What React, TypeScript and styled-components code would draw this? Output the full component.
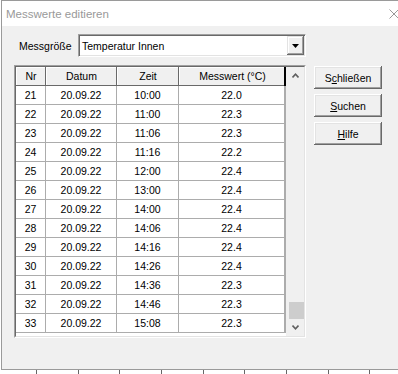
import styled, { createGlobalStyle } from "styled-components";

const GlobalStyle = createGlobalStyle`
  html, body {
    margin: 0;
    padding: 0;
    background: #ffffff;
    overflow: hidden;
  }
  body {
    font-family: "Liberation Sans", Arial, sans-serif;
    font-size: 10.5px;
    color: #000000;
  }
`;

const Screen = styled.div`
  width: 398px;
  height: 374px;
  overflow: hidden;
  display: flex;
  flex-direction: column;
`;

const Window = styled.div`
  margin-left: 1px;
  width: 417px;
  height: 370px;
  flex-shrink: 0;
  box-sizing: border-box;
  border: 1px solid #9a9a9a;
  background: #f0f0f0;
  display: flex;
  flex-direction: column;
`;

const TitleBar = styled.div`
  height: 25px;
  background: #ffffff;
  display: flex;
  align-items: center;
  padding-left: 4px;
`;

const Title = styled.span`
  flex: 1;
  font-size: 11.5px;
  color: #999999;
`;

const CloseBox = styled.div`
  width: 46px;
  height: 100%;
  display: flex;
  align-items: center;
  justify-content: center;
`;

const Body = styled.div`
  padding: 8px 12px 0 12px;
  display: flex;
  flex-direction: column;
`;

const ComboRow = styled.div`
  display: flex;
  align-items: center;
  height: 23px;
`;

const Label = styled.span`
  width: 59px;
  margin-left: 5px;
`;

const Combo = styled.div`
  width: 228px;
  height: 23px;
  box-sizing: border-box;
  background: #ffffff;
  border: 1px solid;
  border-color: #a0a0a0 #ffffff #ffffff #a0a0a0;
  box-shadow: inset 1px 1px #696969, inset -1px -1px #e3e3e3;
  display: flex;
  align-items: stretch;
`;

const ComboText = styled.span`
  flex: 1;
  display: flex;
  align-items: center;
  padding-left: 3px;
`;

const DropButton = styled.div`
  width: 17px;
  margin: 1px;
  box-sizing: border-box;
  background: #f0f0f0;
  box-shadow: inset -1px -1px #696969, inset 1px 1px #e3e3e3,
    inset -2px -2px #a0a0a0, inset 2px 2px #ffffff;
  display: flex;
  align-items: center;
  justify-content: center;
`;

const MainRow = styled.div`
  margin-top: 8px;
  display: flex;
  gap: 8px;
  align-items: flex-start;
`;

const TableFrame = styled.div`
  width: 292px;
  height: 273px;
  box-sizing: border-box;
  border: 1px solid;
  border-color: #a0a0a0 #ffffff #ffffff #a0a0a0;
  display: flex;
`;

const TableInner = styled.div`
  flex: 1;
  border: 1px solid;
  border-color: #696969 #e3e3e3 #e3e3e3 #696969;
  display: flex;
  background: #ffffff;
`;

const Grid = styled.div`
  width: 270px;
  display: flex;
  flex-direction: column;
`;

const columns = "30px 71px 62px 107px";

const HeaderRow = styled.div`
  display: grid;
  grid-template-columns: ${columns};
  height: 19px;
`;

const HeaderCell = styled.div<{ $last?: boolean }>`
  background: #f0f0f0;
  box-shadow: ${(p) =>
    p.$last
      ? "inset -2px 0 #000000, inset 0 -1px #696969, inset 1px 1px #ffffff"
      : "inset -1px -1px #696969, inset 1px 1px #ffffff"};
  display: flex;
  align-items: center;
  justify-content: center;
  padding-bottom: 1px;
  box-sizing: border-box;
`;

const DataRow = styled.div`
  display: grid;
  grid-template-columns: ${columns};
  height: 19px;
`;

const DataCell = styled.div<{ $last?: boolean }>`
  box-sizing: border-box;
  border-bottom: 1px solid #acacac;
  border-right: ${(p) => (p.$last ? "2px" : "1px")} solid #acacac;
  display: flex;
  align-items: center;
  justify-content: center;
`;

const ScrollBar = styled.div`
  width: 18px;
  background: #f0f0f0;
  display: flex;
  flex-direction: column;
`;

const ScrollButton = styled.div`
  height: 17px;
  display: flex;
  align-items: center;
  justify-content: center;
`;

const Track = styled.div`
  flex: 1;
  display: flex;
  flex-direction: column;
  justify-content: flex-end;
`;

const Thumb = styled.div`
  height: 17px;
  width: 15px;
  margin-left: 3px;
  background: #cdcdcd;
`;

const ButtonColumn = styled.div`
  margin-top: 1px;
  display: flex;
  flex-direction: column;
  gap: 5px;
`;

const Button = styled.div`
  width: 68px;
  height: 23px;
  box-sizing: border-box;
  background: #f0f0f0;
  box-shadow: inset -1px -1px #696969, inset 1px 1px #ffffff,
    inset -2px -2px #a0a0a0, inset 2px 2px #e3e3e3;
  display: flex;
  align-items: center;
  justify-content: center;
`;

const Ruler = styled.div`
  height: 4px;
  background: repeating-linear-gradient(
    90deg,
    transparent 0 36px,
    #666666 36px 37px,
    transparent 37px 41.67px
  );
`;

const rows = [
  ["21", "20.09.22", "10:00", "22.0"],
  ["22", "20.09.22", "11:00", "22.3"],
  ["23", "20.09.22", "11:06", "22.3"],
  ["24", "20.09.22", "11:16", "22.2"],
  ["25", "20.09.22", "12:00", "22.4"],
  ["26", "20.09.22", "13:00", "22.4"],
  ["27", "20.09.22", "14:00", "22.4"],
  ["28", "20.09.22", "14:06", "22.4"],
  ["29", "20.09.22", "14:16", "22.4"],
  ["30", "20.09.22", "14:26", "22.4"],
  ["31", "20.09.22", "14:36", "22.3"],
  ["32", "20.09.22", "14:46", "22.3"],
  ["33", "20.09.22", "15:08", "22.3"],
];

const Chevron = ({ up }: { up?: boolean }) => (
  <svg width="7" height="5" viewBox="0 0 7 5">
    <polyline
      points={up ? "0.5,4.5 3.5,1.2 6.5,4.5" : "0.5,0.5 3.5,3.8 6.5,0.5"}
      fill="none"
      stroke="#606060"
      strokeWidth="1.6"
    />
  </svg>
);

export default function App() {
  return (
    <Screen>
      <GlobalStyle />
      <Window>
        <TitleBar>
          <Title>Messwerte editieren</Title>
          <CloseBox>
            <svg width="10" height="10" viewBox="0 0 10 10">
              <path d="M0.5 0.5 L9.5 9.5 M9.5 0.5 L0.5 9.5" stroke="#999999" strokeWidth="1" />
            </svg>
          </CloseBox>
        </TitleBar>
        <Body>
          <ComboRow>
            <Label>Messgröße</Label>
            <Combo>
              <ComboText>Temperatur Innen</ComboText>
              <DropButton>
                <svg width="7" height="4" viewBox="0 0 7 4">
                  <polygon points="0,0 7,0 3.5,4" fill="#000000" />
                </svg>
              </DropButton>
            </Combo>
          </ComboRow>
          <MainRow>
            <TableFrame>
              <TableInner>
                <Grid>
                  <HeaderRow>
                    <HeaderCell>Nr</HeaderCell>
                    <HeaderCell>Datum</HeaderCell>
                    <HeaderCell>Zeit</HeaderCell>
                    <HeaderCell $last>Messwert (°C)</HeaderCell>
                  </HeaderRow>
                  {rows.map((r) => (
                    <DataRow key={r[0]}>
                      <DataCell>{r[0]}</DataCell>
                      <DataCell>{r[1]}</DataCell>
                      <DataCell>{r[2]}</DataCell>
                      <DataCell $last>{r[3]}</DataCell>
                    </DataRow>
                  ))}
                </Grid>
                <ScrollBar>
                  <ScrollButton>
                    <Chevron up />
                  </ScrollButton>
                  <Track>
                    <Thumb />
                  </Track>
                  <ScrollButton>
                    <Chevron />
                  </ScrollButton>
                </ScrollBar>
              </TableInner>
            </TableFrame>
            <ButtonColumn>
              <Button>
                S<u>c</u>hließen
              </Button>
              <Button>
                <u>S</u>uchen
              </Button>
              <Button>
                <u>H</u>ilfe
              </Button>
            </ButtonColumn>
          </MainRow>
        </Body>
      </Window>
      <Ruler />
    </Screen>
  );
}
